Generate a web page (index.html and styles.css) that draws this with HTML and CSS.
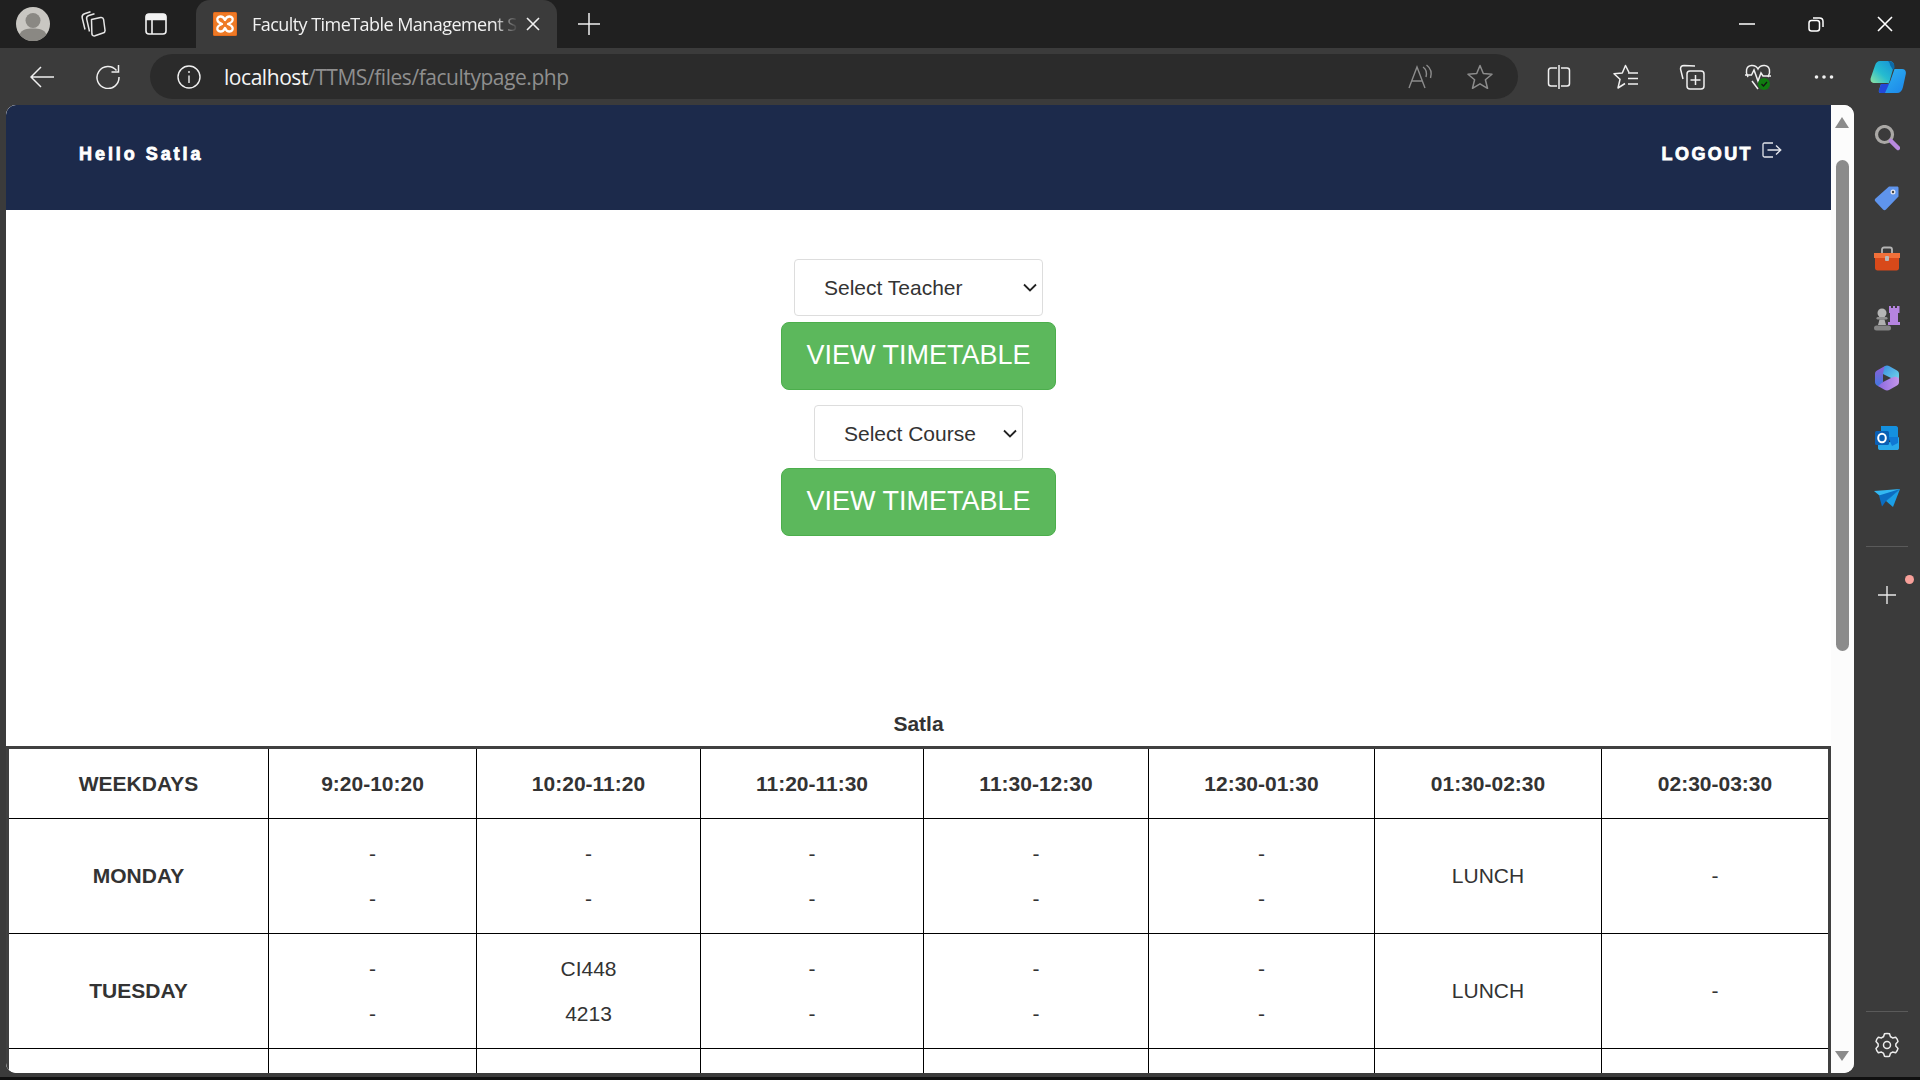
FILE: index.html
```html
<!DOCTYPE html>
<html lang="en">
<head>
<meta charset="utf-8">
<title>Faculty TimeTable Management System</title>
<link rel="stylesheet" href="styles.css">
</head>
<body>
<div class="browser">
  <div class="tabbar">
    <div class="avatar">
      <svg viewBox="0 0 34 34" width="34" height="34"><circle cx="17" cy="17" r="17" fill="#c9c7c2"/><circle cx="17" cy="13.500" r="7.500" fill="#8a8883"/><path d="M3.500 27.500C6 22 11 21.500 17 21.500S28 22 30.500 27.500A17 17 0 0 1 3.500 27.500Z" fill="#8a8883"/></svg>
    </div>
    <div class="tbicon ic-tabs">
      <svg viewBox="0 0 26 26" width="26" height="26" fill="none" stroke="#e6e6e6" stroke-width="1.500" stroke-linejoin="round"><path d="M12.500 8.500 21.500 6.500C23 6.200 24.300 7 24.600 8.500L26 19C26.200 20.500 25.400 21.700 24 22L16 24.800C14.500 25.200 13.200 24.500 12.900 23Z" transform="translate(-1 0)"/><path d="M14.500 2.800 8.800 4.500C7.200 5 6.300 6.500 6.700 8.200L9.500 20.500"/><path d="M10.500 .8 4.500 2.800C2.700 3.500 1.800 5 2.200 6.800L5 18.500"/></svg>
    </div>
    <div class="tbicon ic-window">
      <svg viewBox="0 0 24 24" width="24" height="24" fill="none" stroke="#f2f2f2" stroke-width="1.600"><rect x="2" y="2" width="20" height="20" rx="3"/><path d="M8 7.500v14.500"/><path d="M2.500 5C2.500 3.500 3.500 2.500 5 2.500H19C20.500 2.500 21.500 3.500 21.500 5V7.500H2.500Z" fill="#f2f2f2"/></svg>
    </div>
    <div class="tab">
      <span class="favicon">
        <svg viewBox="0 0 24 24" width="24" height="24"><rect width="24" height="24" rx="1.500" fill="#e56b1c"/><rect x="1" y="1" width="22" height="22" fill="#ee7a26"/><path d="M12 8C11 5.500 9.500 4.500 7.500 4.500 5 4.500 3.800 6.500 4.500 8.500 5 10 7 11.200 9 12 7 12.800 5 14 4.500 15.500 3.800 17.500 5 19.500 7.500 19.500 9.500 19.500 11 18.500 12 16 13 18.500 14.500 19.500 16.500 19.500 19 19.500 20.200 17.500 19.500 15.500 19 14 17 12.800 15 12 17 11.200 19 10 19.500 8.500 20.200 6.500 19 4.500 16.500 4.500 14.500 4.500 13 5.500 12 8Z" fill="none" stroke="#fff" stroke-width="2.300" stroke-linejoin="round"/></svg>
      </span>
      <span class="tabtitle">Faculty TimeTable Management S</span>
      <svg class="tabclose" viewBox="0 0 14 14" width="14" height="14" stroke="#f0f0f0" stroke-width="1.600"><path d="M1 1 13 13M13 1 1 13"/></svg>
    </div>
    <svg class="newtab" viewBox="0 0 22 22" width="22" height="22" stroke="#f0f0f0" stroke-width="1.500"><path d="M11 0V22M0 11H22"/></svg>
    <div class="winctl">
      <svg class="wc" viewBox="0 0 16 16" width="16" height="16" stroke="#fff" stroke-width="1.500"><path d="M0 8H16"/></svg>
      <svg class="wc" viewBox="0 0 16 16" width="16" height="16" fill="none" stroke="#fff" stroke-width="1.500"><rect x="1" y="4.500" width="10.500" height="10.500" rx="2.500"/><path d="M5 2H11.500C13.500 2 15 3.500 15 5.500V11"/></svg>
      <svg class="wc" viewBox="0 0 16 16" width="16" height="16" stroke="#fff" stroke-width="1.600"><path d="M1 1 15 15M15 1 1 15"/></svg>
    </div>
  </div>

  <div class="toolbar">
    <svg class="tool" viewBox="0 0 24 24" width="24" height="24" fill="none" stroke="#f0f0f0" stroke-width="1.500"><path d="M1 12H24M11 2 1 12 11 22"/></svg>
    <svg class="tool t-reload" viewBox="0 0 24 24" width="24" height="24" fill="none" stroke="#f0f0f0" stroke-width="1.500"><path d="M20.500 5.500A11 11 0 1 0 23 12"/><path d="M22.500 0V7H15.500"/></svg>
    <div class="urlpill">
      <svg class="t-info" viewBox="0 0 24 24" width="24" height="24" fill="none" stroke="#f0f0f0" stroke-width="1.400"><circle cx="12" cy="12" r="11"/><path d="M12 10.500V18M12 6V8"/></svg>
      <div class="url"><span class="host">localhost</span><span class="path">/TTMS/files/facultypage.php</span></div>
      <svg class="t-read" viewBox="0 0 26 26" width="26" height="26" fill="none" stroke="#8c8c8c" stroke-width="1.400"><path d="M1 24 9 3 17 24M4 17H14"/><path d="M15 3C18 5 19 9 18 13M18.500 1C22.500 4 24 9 22.500 14"/></svg>
      <svg class="t-star" viewBox="0 0 26 26" width="26" height="26" fill="none" stroke="#8c8c8c" stroke-width="1.500"><path d="M13 1.500 16.300 9.500 25 10.200 18.400 15.800 20.500 24.300 13 19.800 5.500 24.300 7.600 15.800 1 10.200 9.700 9.500Z" stroke-linejoin="round"/></svg>
    </div>
    <svg class="tool t-split" viewBox="0 0 24 26" width="24" height="26" fill="none" stroke="#f0f0f0" stroke-width="1.500"><path d="M10 4H4C2.300 4 1.500 5 1.500 6.500V19.500C1.500 21 2.300 22 4 22H10M14 4H20C21.700 4 22.500 5 22.500 6.500V19.500C22.500 21 21.700 22 20 22H14M12 1V25"/></svg>
    <svg class="tool t-fav" viewBox="0 0 26 26" width="26" height="26" fill="none" stroke="#f0f0f0" stroke-width="1.500"><path d="M16 8.500 12.500 1.500 9.300 9 1 9.800 7 15.300 5 24 12 19.500" stroke-linejoin="round"/><path d="M15 9H25M15 14.500H25M15 20H25"/></svg>
    <svg class="tool t-coll" viewBox="0 0 26 26" width="26" height="26" fill="none" stroke="#f0f0f0" stroke-width="1.500"><path d="M16 2 5 1.500C3 1.500 1.500 3 1.500 5L4 15"/><rect x="8" y="7" width="17" height="18" rx="3"/><path d="M16.500 11V21M11.500 16H21.500"/></svg>
    <svg class="tool t-health" viewBox="0 0 28 28" width="28" height="28" fill="none" stroke="#f0f0f0" stroke-width="1.500"><path d="M4 14C1 9 2 3 7.500 2.500 10.500 2.300 13 4 14 6 15 4 17.500 2.300 20.500 2.500 26 3 27 9 24 14M8 18 14 26"/><path d="M1 12H7.500L10 7 14 18 17 10 19 13H27"/><circle cx="20" cy="21" r="6" fill="#107c10" stroke="none"/><path d="M17.500 21 19.500 23 23 19" stroke="#141414" stroke-width="1.200"/></svg>
    <svg class="tool t-more" viewBox="0 0 20 6" width="20" height="6" fill="#f0f0f0"><circle cx="2.500" cy="3" r="1.800"/><circle cx="10" cy="3" r="1.800"/><circle cx="17.500" cy="3" r="1.800"/></svg>
    <svg class="tool t-copilot" viewBox="0 0 36 34" width="36" height="34"><defs><linearGradient id="cg1" x1="0" y1="1" x2="1" y2="0"><stop offset="0" stop-color="#8fe3a0"/><stop offset="0.450" stop-color="#25bcd0"/><stop offset="1" stop-color="#1590d8"/></linearGradient><linearGradient id="cg2" x1="0" y1="0" x2="1" y2="1"><stop offset="0" stop-color="#30b8f0"/><stop offset="1" stop-color="#1b85ea"/></linearGradient></defs><path d="M10 1H19C22 1 24.500 3 24 6L19 23H5C1.500 23 0 21 .7 18L5 5.500C6 2.500 7.500 1 10 1Z" fill="url(#cg1)"/><path d="M18 1C22 1 25 3 24.500 8L23 10 20 5C20 3 19 2 18 1Z" fill="#0c6aa8"/><path d="M24.500 9H32C35 9 36.300 11 35.800 14L33 27C32 31 30 33 27 33H11C9 33 8.500 32 9 30L11 24H17C19 24 19.800 23 20.300 21Z" fill="url(#cg2)"/><path d="M11 24H19L15 33H11C9 33 8.500 32 9 30Z" fill="#2348d8"/></svg>
  </div>

  <div class="content">
    <div class="viewport">
      <main class="page">
        <header class="topnav">
          <span class="hello">Hello Satla</span>
          <a class="logout">LOGOUT<svg class="logout-ic" viewBox="0 0 20 16" width="20" height="16" fill="none" stroke="#e4e6ec" stroke-width="1.300"><path d="M11 1H2.500C1.500 1 1 1.500 1 2.500V13.500C1 14.500 1.500 15 2.500 15H11M5.500 8H18M14 3.500 18.800 8 14 12.500"/></svg></a>
        </header>
        <form class="picker">
          <span class="selectwrap">
            <select class="select sel-teacher"><option>Select Teacher</option></select>
            <svg class="chev" viewBox="0 0 14 9" width="14" height="9" fill="none" stroke="#222" stroke-width="1.800"><path d="M1 1.500 7 7.500 13 1.500"/></svg>
          </span>
          <button type="button" class="btn btn-first">VIEW TIMETABLE</button>
          <span class="selectwrap selectwrap-course">
            <select class="select sel-course"><option>Select Course</option></select>
            <svg class="chev" viewBox="0 0 14 9" width="14" height="9" fill="none" stroke="#222" stroke-width="1.800"><path d="M1 1.500 7 7.500 13 1.500"/></svg>
          </span>
          <button type="button" class="btn btn-second">VIEW TIMETABLE</button>
        </form>
        <div class="tt-title">Satla</div>
        <table class="tt">
          <colgroup>
            <col class="c0"><col class="c1"><col class="c2"><col class="c3"><col class="c4"><col class="c5"><col class="c6"><col class="c7">
          </colgroup>
          <thead>
            <tr class="head">
              <th>WEEKDAYS</th><th>9:20-10:20</th><th>10:20-11:20</th><th>11:20-11:30</th><th>11:30-12:30</th><th>12:30-01:30</th><th>01:30-02:30</th><th>02:30-03:30</th>
            </tr>
          </thead>
          <tbody>
            <tr>
              <th>MONDAY</th>
              <td><p>-</p><p>-</p></td><td><p>-</p><p>-</p></td><td><p>-</p><p>-</p></td><td><p>-</p><p>-</p></td><td><p>-</p><p>-</p></td><td>LUNCH</td><td>-</td>
            </tr>
            <tr>
              <th>TUESDAY</th>
              <td><p>-</p><p>-</p></td><td><p>CI448</p><p>4213</p></td><td><p>-</p><p>-</p></td><td><p>-</p><p>-</p></td><td><p>-</p><p>-</p></td><td>LUNCH</td><td>-</td>
            </tr>
            <tr>
              <th></th><td></td><td></td><td></td><td></td><td></td><td></td><td></td>
            </tr>
          </tbody>
        </table>
      </main>
      <div class="scrollbar">
        <span class="arrow-up"></span>
        <span class="thumb"></span>
        <span class="arrow-down"></span>
      </div>
    </div>
    <aside class="sidebar">
      <span class="slot"><svg viewBox="0 1 26 26" width="26" height="26" fill="none"><circle cx="10.500" cy="10.500" r="8" stroke="#aaa8a5" stroke-width="3.200"/><path d="M17 17 24 24" stroke="#b98ae0" stroke-width="4.500" stroke-linecap="round"/></svg></span>
      <span class="slot"><svg viewBox="0 0 26 26" width="26" height="26"><path d="M15 1.500H23C24 1.500 24.500 2 24.500 3V11.500L12 24.500C11 25.500 10 25.500 9 24.500L1.500 16.500C.5 15.500.5 14.500 1.500 13.500Z" fill="#5f94ec"/><circle cx="19" cy="7" r="2.500" fill="#e8e8f0"/><circle cx="19" cy="7" r="1.200" fill="#444"/></svg></span>
      <span class="slot"><svg viewBox="0 -1 28 26" width="28" height="26"><path d="M9 7V3.500C9 2 10 1.500 11 1.500H17C18 1.500 19 2 19 3.500V7" fill="none" stroke="#b5b5b5" stroke-width="1.800"/><path d="M1 7H27V12H1Z" fill="#f0703a"/><path d="M2 12H26V22C26 23.500 25 24.500 23.500 24.500H4.500C3 24.500 2 23.500 2 22Z" fill="#d8491a"/><rect x="12" y="10" width="4" height="5" rx="1" fill="#b9b9b9"/></svg></span>
      <span class="slot"><svg viewBox="0 0 28 28" width="28" height="28"><path d="M16 2H18V4H20V2H22V4H24V2H26.500V9H25V18H27V21H15V18H17V9H16Z" fill="#b584e0"/><circle cx="9" cy="9" r="4.500" fill="#b5b5b5"/><rect x="3.500" y="13" width="11" height="2.500" rx="1.200" fill="#8f8f8f"/><path d="M6.500 15.500H11.500L13 21H5Z" fill="#b0b0b0"/><rect x="1" y="21.500" width="17" height="5" rx="2.500" fill="#848484"/></svg></span>
      <span class="slot"><svg viewBox="0 0 26 26" width="26" height="26"><defs><linearGradient id="m1" x1="0" y1="0" x2="0" y2="1"><stop offset="0" stop-color="#8f5fd6"/><stop offset="1" stop-color="#3f78e0"/></linearGradient><linearGradient id="m2" x1="0" y1="0" x2="1" y2="1"><stop offset="0" stop-color="#3a8fe0"/><stop offset="1" stop-color="#70d6ea"/></linearGradient><linearGradient id="m3" x1="0" y1="0" x2="1" y2="0"><stop offset="0" stop-color="#8a68e0"/><stop offset="1" stop-color="#c496ea"/></linearGradient></defs><path d="M10.500 1.200 3 5.500C1.500 6.400 1 7.500 1 9V17C1 18.500 1.700 19.600 3 20.500L6 22 9 17V9L14 3Z" fill="url(#m1)"/><path d="M10.500 1.200C12 .4 14 .4 15.500 1.200L23 5.500C24.500 6.400 25 7.500 25 9V15L17 13 9 9Z" fill="url(#m2)"/><path d="M25 13V17C25 18.500 24.500 19.600 23 20.500L15.500 24.800C14 25.600 12 25.600 10.500 24.800L4 21 9 17 17 13 21 11.500Z" fill="url(#m3)"/></svg></span>
      <span class="slot"><svg viewBox="0 0 26 26" width="26" height="26"><path d="M7 1H22C23 1 24 2 24 3V12H7Z" fill="#1490df"/><path d="M4 12 14 18 25 12V23C25 24.500 24 25 23 25H6C5 25 4 24.500 4 23Z" fill="#28a8ea"/><path d="M14 12H24V18L18 21Z" fill="#0f78d4"/><rect x="1" y="6" width="14" height="14" rx="1.500" fill="#0a5fb4"/><ellipse cx="8" cy="13" rx="3.800" ry="4.200" fill="none" stroke="#fff" stroke-width="2"/></svg></span>
      <span class="slot"><svg viewBox="0 -1 28 22" width="28" height="22"><path d="M1 3 27 1 13 13Z" fill="#33b8f2"/><path d="M27 1 13 13 20 19Z" fill="#1b9fe6"/><path d="M6 7.500 9 18.500 13 13 27 1Z" fill="#0b6dc2"/></svg></span>
      <span class="sb-div"></span>
      <span class="sb-add">
        <svg viewBox="0 0 18 18" width="18" height="18" stroke="#e8e8e8" stroke-width="1.400"><path d="M9 0V18M0 9H18"/></svg>
        <span class="reddot"></span>
      </span>
      <span class="sb-spring"></span>
      <span class="sb-div sb-div-low"></span>
      <svg class="sb-gear" viewBox="0 0 26 26" width="26" height="26" fill="none" stroke="#ececec" stroke-width="1.500" stroke-linejoin="round"><circle cx="13" cy="13" r="3.500"/><path d="M10.500 1.800C12 1.300 14 1.300 15.500 1.800L16.500 4.800C17.300 5.100 18 5.500 18.600 6L21.700 5.300C22.800 6.400 23.700 8 24 9.600L21.800 11.900C21.900 12.600 21.900 13.400 21.800 14.100L24 16.400C23.700 18 22.800 19.600 21.700 20.700L18.600 20C18 20.500 17.300 20.900 16.500 21.200L15.500 24.200C14 24.700 12 24.700 10.500 24.200L9.500 21.200C8.700 20.900 8 20.500 7.400 20L4.300 20.700C3.200 19.600 2.300 18 2 16.400L4.200 14.100C4.100 13.400 4.100 12.600 4.200 11.900L2 9.600C2.300 8 3.200 6.400 4.300 5.300L7.400 6C8 5.500 8.700 5.100 9.500 4.800Z"/></svg>
    </aside>
  </div>
  <div class="bottomgap"></div>
</div>
</body>
</html>
```

FILE: styles.css
```css
* { box-sizing: border-box; }
html, body { margin: 0; height: 100%; overflow: hidden; }
body { font-family: "Liberation Sans", Arial, sans-serif; background: #3b3b3b; }

.browser { display: flex; flex-direction: column; width: 1920px; height: 1080px; background: #3b3b3b; }

/* title bar */
.tabbar { display: flex; align-items: center; height: 48px; background: #202020; flex: none; }
.avatar { width: 34px; height: 34px; margin: 0 0 0 16px; flex: none; display: flex; }
.tbicon { display: flex; flex: none; }
.ic-tabs { margin-left: 30px; }
.ic-window { margin-left: 38px; }
.tab { display: flex; align-items: center; width: 361px; height: 48px; margin-left: 28px; background: #3b3b3b; border-radius: 14px 14px 0 0; flex: none; padding-left: 17px; }
.favicon { display: flex; flex: none; }
.tabtitle { margin-left: 15px; width: 269px; flex: none; overflow: hidden; white-space: nowrap; color: #f2f2f2; font: 18px/24px "Open Sans", sans-serif; letter-spacing: -0.55px; -webkit-mask-image: linear-gradient(90deg, #000 90%, transparent 99%); mask-image: linear-gradient(90deg, #000 90%, transparent 99%); }
.tabclose { margin-left: 5px; flex: none; }
.newtab { margin-left: 21px; flex: none; }
.winctl { margin-left: auto; display: flex; align-items: center; gap: 53px; padding-right: 27px; }
.wc { flex: none; }

/* toolbar */
.toolbar { display: flex; align-items: center; height: 57px; background: #3b3b3b; flex: none; padding-left: 30px; }
.tool { flex: none; }
.t-reload { margin-left: 42px; }
.urlpill { display: flex; align-items: center; width: 1368px; height: 45px; margin-left: 30px; border-radius: 23px; background: #2b2b2b; flex: none; padding-left: 27px; }
.t-info { flex: none; }
.url { margin-left: 23px; font: 21px/28px "Open Sans", sans-serif; white-space: nowrap; letter-spacing: -0.45px; }
.host { color: #f4f4f4; }
.path { color: #8f8f8f; }
.t-read { margin-left: auto; flex: none; }
.t-star { margin-left: 33px; margin-right: 25px; flex: none; }
.t-split { margin-left: 29px; }
.t-fav { margin-left: 42px; }
.t-coll { margin-left: 40px; }
.t-health { margin-left: 39px; }
.t-more { margin-left: 42px; }
.t-copilot { margin-left: 36px; }

/* content */
.content { display: flex; flex: 1; min-height: 0; }
.viewport { display: flex; flex: 1; min-width: 0; margin-left: 6px; border-radius: 10px; overflow: hidden; background: #fff; }
.page { width: 1825px; flex: none; overflow: hidden; background: #fff; color: #333; }
.topnav { display: flex; align-items: center; justify-content: space-between; height: 105px; background: #1c2a4b; color: #fff; padding: 0 49px 7px 73px; }
.hello { font-size: 18px; font-weight: bold; letter-spacing: 2.950px; -webkit-text-stroke: .8px #fff; }
.logout { display: flex; align-items: flex-start; font-size: 18px; font-weight: bold; letter-spacing: 2.400px; -webkit-text-stroke: .8px #fff; }
.logout-ic { margin: -2px 0 0 9px; flex: none; }

.picker { display: flex; flex-direction: column; align-items: center; padding-top: 49px; }
.selectwrap { position: relative; display: block; height: 57px; flex: none; }
.selectwrap-course { margin-top: 15px; height: 56px; }
.select { display: block; height: 100%; padding: 0 0 0 29px; background: #fff; border: 1px solid #ddd; border-radius: 4px; font: 21px "Liberation Sans", Arial, sans-serif; color: #333; appearance: none; -webkit-appearance: none; }
.sel-teacher { width: 249px; }
.sel-course { width: 209px; }
.chev { position: absolute; right: 6px; top: 24px; pointer-events: none; }
.btn { display: block; width: 275px; height: 68px; margin-top: 6px; padding: 0 0 2px; background: #5cb85c; border: 1px solid #4cae4c; border-radius: 8px; color: #fff; font: 27px "Liberation Sans", Arial, sans-serif; }
.btn-second { margin-top: 7px; }

.tt-title { margin-top: 176px; height: 34px; text-align: center; font-size: 21px; font-weight: bold; line-height: 24px; color: #333; }
.tt { width: 1825px; table-layout: fixed; border-collapse: collapse; border: 3px solid #404040; font-size: 21px; color: #333; }
.c0 { width: 261px; } .c1 { width: 208px; } .c2 { width: 224px; } .c3 { width: 223px; } .c4 { width: 225px; } .c5 { width: 226px; } .c6 { width: 227px; } .c7 { width: 228px; }
.tt th, .tt td { border: 1px solid #000; text-align: center; padding: 0; vertical-align: middle; }
.tt tr { height: 115px; }
.tt tr.head { height: 71px; }
.tt p { margin: 0; line-height: 24px; padding: 11px 0 10px; }

/* scrollbar */
.scrollbar { position: relative; flex: 1; background: #fcfcfc; }
.thumb { position: absolute; left: 5px; top: 55px; width: 13px; height: 491px; border-radius: 7px; background: #8b8b8b; }
.arrow-up { position: absolute; left: 4px; top: 12px; border: 7.500px solid transparent; border-top: 0; border-bottom: 11px solid #8b8b8b; }
.arrow-down { position: absolute; left: 4px; bottom: 12px; border: 7.500px solid transparent; border-bottom: 0; border-top: 10px solid #8b8b8b; }

/* sidebar */
.sidebar { display: flex; flex-direction: column; align-items: center; width: 66px; flex: none; padding: 3px 0 15px; }
.slot { display: flex; align-items: center; justify-content: center; height: 60px; flex: none; }
.sb-div { width: 42px; height: 1px; background: #5a5a5a; flex: none; margin-top: 18px; }
.sb-add { position: relative; display: flex; flex: none; margin-top: 39px; }
.reddot { position: absolute; left: 27px; top: -11px; width: 9px; height: 9px; border-radius: 50%; background: #f8a09a; }
.sb-spring { flex: 1; }
.sb-div-low { margin-top: 0; }
.sb-gear { flex: none; margin-top: 20px; }

.bottomgap { height: 7px; flex: none; background: linear-gradient(#3b3b3b 4px, #101010 4px); }
```
